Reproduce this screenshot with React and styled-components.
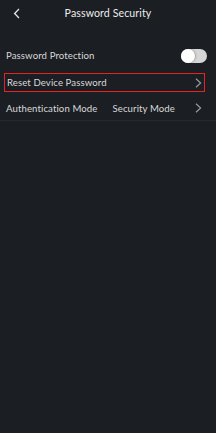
import React from "react";
import styled, { createGlobalStyle } from "styled-components";

const GlobalStyle = createGlobalStyle`
  html, body {
    margin: 0;
    padding: 0;
    background: #1b1e23;
  }
  body {
    font-family: Lato, "Liberation Sans", sans-serif;
  }
`;

const Screen = styled.div`
  width: 216px;
  height: 433px;
  background: #1b1e23;
  display: flex;
  flex-direction: column;
`;

const Header = styled.div`
  position: relative;
  height: 26px;
  display: flex;
  align-items: center;
  justify-content: center;
`;

const BackButton = styled.div`
  position: absolute;
  left: 13px;
  top: 8px;
  width: 8px;
  height: 11px;
  display: flex;
`;

const Title = styled.div`
  font-size: 10.6px;
  color: #ececec;
  letter-spacing: 0.1px;
`;

const List = styled.div`
  margin-top: 16px;
  display: flex;
  flex-direction: column;
`;

const Row = styled.div`
  height: ${(p) => p.$h || 27}px;
  display: flex;
  align-items: center;
  justify-content: space-between;
  padding: 0 ${(p) => p.$pr || 14}px 0 6px;
  box-sizing: border-box;
  border-bottom: ${(p) => (p.$divider ? "1px solid #262a30" : "none")};
`;

const Highlight = styled.div`
  margin: 4px 11px 4px 4px;
  height: 19px;
  border: 1.5px solid #e8231f;
  box-sizing: border-box;
  display: flex;
  align-items: center;
  justify-content: space-between;
  padding: 0 2px 0 2px;
`;

const Label = styled.span`
  font-size: 9.6px;
  color: #d9d9d9;
  letter-spacing: 0.1px;
`;

const Value = styled.span`
  font-size: 9.6px;
  color: #d9d9d9;
  letter-spacing: 0.1px;
  margin-right: 20px;
`;

const Right = styled.div`
  display: flex;
  align-items: center;
`;

const Toggle = styled.div`
  width: 26px;
  height: 14px;
  border-radius: 7px;
  background: #d6d6d6;
  position: relative;
`;

const Knob = styled.div`
  position: absolute;
  left: 0;
  top: 0;
  width: 14px;
  height: 14px;
  border-radius: 50%;
  background: #ffffff;
  box-shadow: 1px 0 2px rgba(0, 0, 0, 0.25);
`;

const Chevron = ({ color = "#9a9a9a" }) => (
  <svg width="7" height="10" viewBox="0 0 7 10">
    <path d="M1 0.8 L5.6 5 L1 9.2" fill="none" stroke={color} strokeWidth="1.2" />
  </svg>
);

export default function App() {
  return (
    <>
      <GlobalStyle />
      <Screen>
        <Header>
          <BackButton>
            <svg width="8" height="11" viewBox="0 0 8 11">
              <path d="M6 1 L1.6 5.5 L6 10" fill="none" stroke="#e6e6e6" strokeWidth="1.3" />
            </svg>
          </BackButton>
          <Title>Password Security</Title>
        </Header>
        <List>
          <Row $pr={9}>
            <Label>Password Protection</Label>
            <Toggle>
              <Knob />
            </Toggle>
          </Row>
          <Highlight>
            <Label>Reset Device Password</Label>
            <Chevron />
          </Highlight>
          <Row $h={25} $divider>
            <Label>Authentication Mode</Label>
            <Right>
              <Value>Security Mode</Value>
              <Chevron />
            </Right>
          </Row>
        </List>
      </Screen>
    </>
  );
}
